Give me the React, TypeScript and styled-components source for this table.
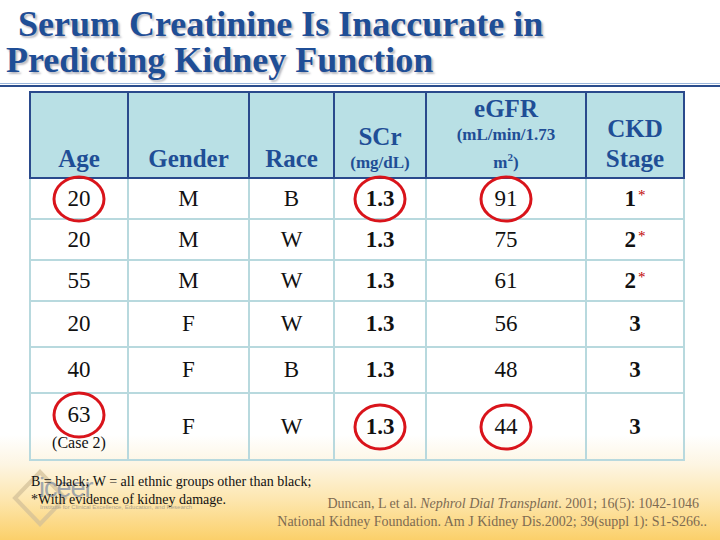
import React from 'react';
import styled, { createGlobalStyle } from 'styled-components';

const GlobalStyle = createGlobalStyle`
    html, body {
        margin: 0;
        padding: 0;
        background: #fff;
    }
`;

const Slide = styled.div`
    width: 720px;
    height: 540px;
    overflow: hidden;
    font-family: "Liberation Serif", "Times New Roman", serif;
    background: linear-gradient(180deg, #fff 0, #fff 435px, #fdf5e2 465px, #fde6ae 500px, #fbd06a 540px);
`;

const Title = styled.h1`
    margin: 0;
    padding: 6px 0 0 6px;
    font-family: inherit;
    font-size: 36px;
    line-height: 36px;
    font-weight: bold;
    color: #1f4e96;
    text-shadow: 2px 2px 2px rgba(60, 60, 80, 0.35);
`;

const TitleLine = styled.span<{ $indent?: number }>`
    display: block;
    padding-left: ${p => p.$indent || 0}px;
`;

const Rule = styled.div`
    margin-top: 5px;
    height: 1px;
    border-top: 1px solid #9ab6dc;
    border-bottom: 2px solid #2b4c8c;
`;

const Table = styled.table`
    margin: 4px 0 0 29px;
    border-collapse: collapse;
    table-layout: fixed;
    width: 642px;
    font-family: inherit;
`;

const HeadCell = styled.th<{ $w: number }>`
    width: ${p => p.$w}px;
    height: 81px;
    padding: 0 0 3px;
    background: #b9e0e5;
    border: 2px solid #2a4a8c;
    vertical-align: bottom;
    text-align: center;
    color: #1f4e96;
    font-size: 25px;
    line-height: 30px;
    font-weight: bold;
`;

const Sub = styled.span`
    display: block;
    font-size: 17px;
    line-height: 23px;
`;

const Main = styled.span<{ $lh?: number }>`
    display: block;
    line-height: ${p => p.$lh || 30}px;
`;

const Row = styled.tr<{ $h: number }>`
    height: ${p => p.$h}px;
`;

const Cell = styled.td<{ $bold?: boolean }>`
    padding: 0;
    border: 2px solid #b8d9de;
    text-align: center;
    vertical-align: middle;
    font-size: 23px;
    line-height: 26px;
    color: #111;
    font-weight: ${p => (p.$bold ? 'bold' : 'normal')};
`;

const Circled = styled.span`
    position: relative;
    display: inline-block;

    &::after {
        content: '';
        position: absolute;
        left: 50%;
        top: 50%;
        width: 47px;
        height: 41px;
        transform: translate(-50%, -50%);
        border: 3.5px solid #d9141b;
        border-radius: 50%;
    }
`;

const Star = styled.sup`
    color: #c00000;
    font-weight: normal;
    font-size: 15px;
    vertical-align: top;
    position: relative;
    top: -4px;
    margin-left: 2px;
`;

const Sq = styled.sup`
    font-size: 11px;
`;

const CaseNote = styled.span`
    display: block;
    font-size: 16px;
    line-height: 18px;
    margin-top: 6px;
`;

const Footer = styled.div`
    position: relative;
    padding-top: 12px;
`;

const Notes = styled.div`
    position: relative;
    z-index: 1;
    padding-left: 31px;
    font-size: 14px;
    line-height: 18px;
    color: #111;
`;

const Citations = styled.div`
    margin-top: -14px;
    padding-right: 13px;
    text-align: right;
    font-size: 14px;
    line-height: 18px;
    color: #7d6b52;
`;

const CiteLine = styled.div<{ $pad?: number }>`
    padding-right: ${p => p.$pad || 0}px;
`;

const Logo = styled.div`
    position: absolute;
    left: 12px;
    top: 8px;
    width: 200px;
    height: 60px;
    opacity: 0.7;
`;

const LogoWord = styled.span`
    position: absolute;
    left: 27px;
    top: 4px;
    font-family: "Liberation Sans", Arial, sans-serif;
    font-size: 27px;
    letter-spacing: -1px;
    color: #7b8aa2;
`;

const LogoSub = styled.span`
    position: absolute;
    left: 28px;
    top: 35px;
    font-family: "Liberation Sans", Arial, sans-serif;
    font-size: 6px;
    white-space: nowrap;
    color: #8b8b8b;
`;

type RowData = {
    h: number;
    age: string;
    note?: string;
    gender: string;
    race: string;
    egfr: string;
    stage: string;
    star?: boolean;
    circled?: boolean;
};

const rows: RowData[] = [
    { h: 41, age: '20', gender: 'M', race: 'B', egfr: '91', stage: '1', star: true, circled: true },
    { h: 41, age: '20', gender: 'M', race: 'W', egfr: '75', stage: '2', star: true },
    { h: 41, age: '55', gender: 'M', race: 'W', egfr: '61', stage: '2', star: true },
    { h: 46, age: '20', gender: 'F', race: 'W', egfr: '56', stage: '3' },
    { h: 46, age: '40', gender: 'F', race: 'B', egfr: '48', stage: '3' },
    { h: 67, age: '63', note: '(Case 2)', gender: 'F', race: 'W', egfr: '44', stage: '3', circled: true },
];

const Mark = ({ on, children }: { on?: boolean; children: React.ReactNode }) =>
    on ? <Circled>{children}</Circled> : <>{children}</>;

export default function App() {
    return (
        <Slide>
            <GlobalStyle />
            <Title>
                <TitleLine $indent={12}>Serum Creatinine Is Inaccurate in</TitleLine>
                <TitleLine>Predicting Kidney Function</TitleLine>
            </Title>
            <Rule />

            <Table>
                <thead>
                    <tr>
                        <HeadCell $w={96}>Age</HeadCell>
                        <HeadCell $w={119}>Gender</HeadCell>
                        <HeadCell $w={83}>Race</HeadCell>
                        <HeadCell $w={90}>
                            <Main $lh={28}>SCr</Main>
                            <Sub>(mg/dL)</Sub>
                        </HeadCell>
                        <HeadCell $w={158}>
                            <Main $lh={28}>eGFR</Main>
                            <Sub>(mL/min/1.73</Sub>
                            <Sub>
                                m<Sq>2</Sq>)
                            </Sub>
                        </HeadCell>
                        <HeadCell $w={96}>
                            <Main>CKD</Main>
                            <Main>Stage</Main>
                        </HeadCell>
                    </tr>
                </thead>
                <tbody>
                    {rows.map((r, i) => (
                        <Row key={i} $h={r.h}>
                            <Cell>
                                <Mark on={r.circled}>{r.age}</Mark>
                                {r.note && <CaseNote>{r.note}</CaseNote>}
                            </Cell>
                            <Cell>{r.gender}</Cell>
                            <Cell>{r.race}</Cell>
                            <Cell $bold>
                                <Mark on={r.circled}>1.3</Mark>
                            </Cell>
                            <Cell>
                                <Mark on={r.circled}>{r.egfr}</Mark>
                            </Cell>
                            <Cell $bold>
                                {r.stage}
                                {r.star && <Star>*</Star>}
                            </Cell>
                        </Row>
                    ))}
                </tbody>
            </Table>

            <Footer>
                <Logo>
                    <svg width="56" height="58" viewBox="0 0 56 58">
                        <path d="M28 3 L53 29 L28 55 L3 29 Z" fill="none" stroke="#d2bf98" strokeWidth="4" />
                    </svg>
                    <LogoWord>iceer</LogoWord>
                    <LogoSub>Institute for Clinical Excellence, Education, and Research</LogoSub>
                </Logo>
                <Notes>
                    <div>B = black; W = all ethnic groups other than black;</div>
                    <div>*With evidence of kidney damage.</div>
                </Notes>
                <Citations>
                    <CiteLine $pad={8}>
                        Duncan, L et al. <i>Nephrol Dial Transplant</i>. 2001; 16(5): 1042-1046
                    </CiteLine>
                    <CiteLine>National Kidney Foundation. Am J Kidney Dis.2002; 39(suppl 1): S1-S266..</CiteLine>
                </Citations>
            </Footer>
        </Slide>
    );
}
